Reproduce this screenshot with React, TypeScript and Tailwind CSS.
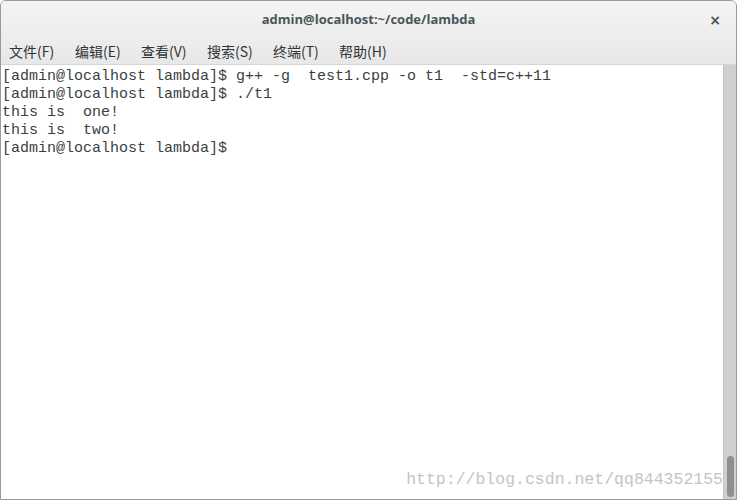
import React from "react";

const menus = ["文件(F)", "编辑(E)", "查看(V)", "搜索(S)", "终端(T)", "帮助(H)"];

const lines = [
  "[admin@localhost lambda]$ g++ -g  test1.cpp -o t1  -std=c++11",
  "[admin@localhost lambda]$ ./t1",
  "this is  one!",
  "this is  two!",
  "[admin@localhost lambda]$ ",
];

const App = () => {
  return (
    <div className="w-[737px] h-[500px] bg-white overflow-hidden">
      <div className="relative flex flex-col w-full h-full border border-[#9a9a9a] rounded-t-[6px] overflow-hidden">
        {/* header */}
        <div className="flex flex-col h-[64px] bg-gradient-to-b from-[#f4f4f4] to-[#e8e8e8] border-b border-[#d6d6d6]">
          <div className="relative flex items-center justify-center h-[37px]">
            <span className="text-[13px] font-bold text-[#4a5558] font-['Open_Sans',sans-serif]">
              admin@localhost:~/code/lambda
            </span>
            <span className="absolute right-[15px] top-[9px] text-[14px] font-bold text-[#4a5558] font-['DejaVu_Sans',sans-serif]">
              ×
            </span>
          </div>
          <div className="flex items-center h-[26px] pl-[8px] gap-[17px] text-[14px] text-[#2e3436] font-['Noto_Sans_CJK_SC',sans-serif]">
            {menus.map((m) => (
              <span key={m} className="w-[49px]">
                {m}
              </span>
            ))}
          </div>
        </div>
        {/* terminal */}
        <div className="flex flex-1">
          <div className="flex-1 bg-white pl-[1px] pt-[3px] font-['Liberation_Mono',monospace] text-[15px] leading-[18px] text-[#3a3f41] whitespace-pre">
            {lines.map((l, i) => (
              <div key={i}>{l}</div>
            ))}
          </div>
          <div className="relative w-[13px] bg-[#cfcfcf] border-l border-[#c4c4c4]">
            <div className="absolute bottom-[2px] left-[3px] w-[7px] h-[41px] rounded-full bg-[#8f8f8f]" />
          </div>
        </div>
        <span className="absolute right-[13px] bottom-[6px] text-[16.5px] text-[#c4c4c4] font-['Liberation_Mono',monospace]">
          http://blog.csdn.net/qq844352155
        </span>
      </div>
    </div>
  );
};

export default App;
